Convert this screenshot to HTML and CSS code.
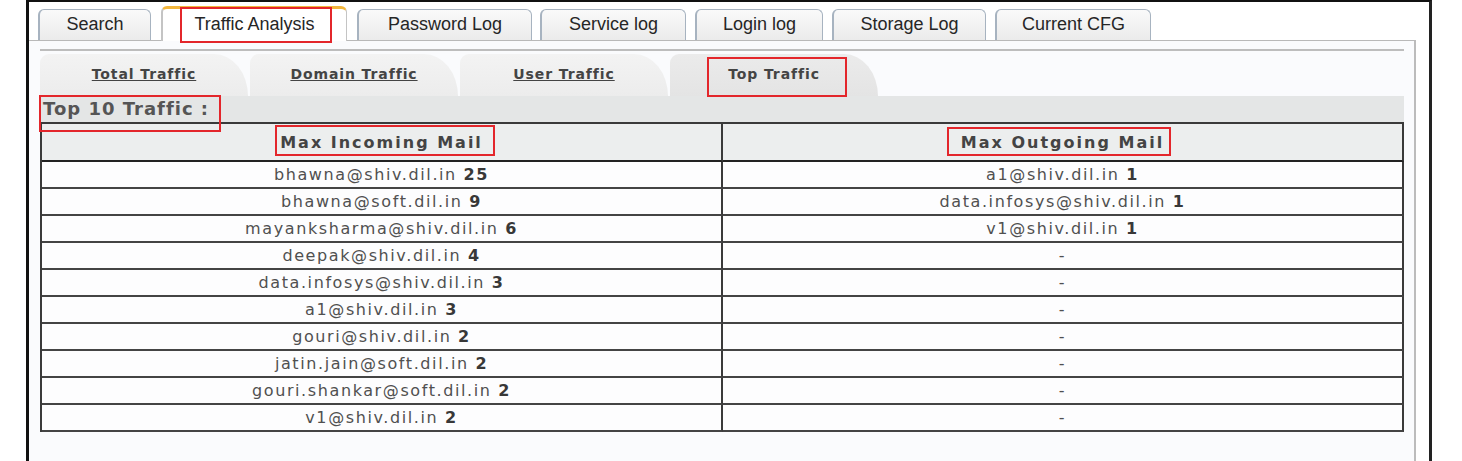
FILE: index.html
```html
<!DOCTYPE html>
<html lang="en">
<head>
  <meta charset="UTF-8">
  <meta name="viewport" content="width=device-width, initial-scale=1.0">
  <title>Traffic Analysis - Top Traffic</title>
  <link rel="stylesheet" href="styles.css">
</head>
<body>
  <div class="frame">
    <ul class="tabs">
      <li class="tab tab-search">Search</li>
      <li class="tab tab-traffic active">Traffic Analysis</li>
      <li class="tab tab-password">Password Log</li>
      <li class="tab tab-service">Service log</li>
      <li class="tab tab-login">Login log</li>
      <li class="tab tab-storage">Storage Log</li>
      <li class="tab tab-cfg">Current CFG</li>
    </ul>

    <div class="panel">
      <div class="subnav">
        <a class="subtab" href="#">Total Traffic</a>
        <a class="subtab" href="#">Domain Traffic</a>
        <a class="subtab" href="#">User Traffic</a>
        <span class="subtab current">Top Traffic</span>
      </div>

      <div class="section-title">Top 10 Traffic :</div>

      <table class="traffic">
        <thead>
          <tr>
            <th>Max Incoming Mail</th>
            <th>Max Outgoing Mail</th>
          </tr>
        </thead>
        <tbody>
          <tr><td>bhawna@shiv.dil.in <b>25</b></td><td>a1@shiv.dil.in <b>1</b></td></tr>
          <tr><td>bhawna@soft.dil.in <b>9</b></td><td>data.infosys@shiv.dil.in <b>1</b></td></tr>
          <tr><td>mayanksharma@shiv.dil.in <b>6</b></td><td>v1@shiv.dil.in <b>1</b></td></tr>
          <tr><td>deepak@shiv.dil.in <b>4</b></td><td>-</td></tr>
          <tr><td>data.infosys@shiv.dil.in <b>3</b></td><td>-</td></tr>
          <tr><td>a1@shiv.dil.in <b>3</b></td><td>-</td></tr>
          <tr><td>gouri@shiv.dil.in <b>2</b></td><td>-</td></tr>
          <tr><td>jatin.jain@soft.dil.in <b>2</b></td><td>-</td></tr>
          <tr><td>gouri.shankar@soft.dil.in <b>2</b></td><td>-</td></tr>
          <tr><td>v1@shiv.dil.in <b>2</b></td><td>-</td></tr>
        </tbody>
      </table>
    </div>

    <!-- red highlight boxes drawn over the screenshot -->
    <div class="mark mark-tab"></div>
    <div class="mark mark-subtab"></div>
    <div class="mark mark-title"></div>
    <div class="mark mark-in"></div>
    <div class="mark mark-out"></div>
  </div>
</body>
</html>
```

FILE: styles.css
```css
html, body {
  margin: 0;
  padding: 0;
  background-color: #fff;
  overflow: hidden;
}

body {
  font-family: "DejaVu Sans", Verdana, sans-serif;
  color: #444;
}

.frame {
  position: relative;
  margin-left: 26px;
  width: 1400px;
  min-height: 480px;
  border-top: 2px solid #111;
  border-left: 3px solid #111;
  border-right: 3px solid #222;
  background-color: #fff;
}

.tabs {
  list-style: none;
  margin: 0;
  padding: 0 0 0 9px;
  height: 38px;
  display: flex;
  align-items: flex-end;
}

.tab {
  box-sizing: border-box;
  height: 31px;
  margin-right: 9px;
  border: 1px solid #a7b3c0;
  border-left-width: 2px;
  border-bottom: none;
  border-radius: 6px 6px 0 0;
  background: linear-gradient(#fafafa, #ebebeb);
  font-family: "Liberation Sans", Arial, sans-serif;
  font-size: 18px;
  line-height: 29px;
  text-align: center;
  color: #262626;
  white-space: nowrap;
}

.tab-search   { width: 113px; }
.tab-traffic  { width: 186px; }
.tab-password { width: 175px; margin-right: 8px; }
.tab-service  { width: 146px; }
.tab-login    { width: 128px; }
.tab-storage  { width: 154px; }
.tab-cfg      { width: 156px; }

.tab.active {
  height: 35px;
  margin-left: 1px;
  margin-right: 10px;
  margin-bottom: -1px;
  border-color: #c4c4c4;
  border-top: 3px solid #f2b63c;
  background: #fff;
  line-height: 31px;
}

.panel {
  margin-right: 13px;
  padding: 8px 10px 0 11px;
  min-height: 430px;
  border-top: 1px solid #b9b9b9;
  border-right: 2px solid #bcbcbc;
  background-color: #fafbfd;
}

.subnav {
  display: flex;
  height: 47px;
  padding-top: 3px;
  box-sizing: border-box;
  border-top: 2px solid #bdbdbd;
}

.subtab {
  box-sizing: border-box;
  width: 208px;
  height: 42px;
  margin-right: 2px;
  border-radius: 9px 34px 0 0 / 9px 42px 0 0;
  background: linear-gradient(#f3f3f3, #ececec);
  text-align: center;
  font-size: 14px;
  font-weight: bold;
  letter-spacing: 0.9px;
  line-height: 40px;
  color: #444;
  text-decoration: underline;
}

.subtab.current {
  background: linear-gradient(#ebebeb, #e4e4e4);
  text-decoration: none;
}

.section-title {
  height: 26px;
  padding-left: 3px;
  background-color: #e4e6e6;
  font-size: 18px;
  font-weight: bold;
  letter-spacing: 1px;
  line-height: 26px;
  color: #555;
}

.traffic {
  width: 100%;
  table-layout: fixed;
  border-spacing: 0;
  border-top: 2px solid #3a3a3a;
  border-left: 2px solid #3a3a3a;
}

.traffic th,
.traffic td {
  width: 50%;
  padding: 0;
  text-align: center;
  border-right: 2px solid #3a3a3a;
  border-bottom: 2px solid #444;
  white-space: nowrap;
}

.traffic th {
  height: 36px;
  background-color: #eceeee;
  font-size: 16px;
  font-weight: bold;
  letter-spacing: 2px;
  color: #444;
  border-bottom-color: #222;
}

.traffic td {
  height: 25px;
  background-color: #fdfdfe;
  font-size: 16px;
  letter-spacing: 1.6px;
  color: #505050;
}

.traffic td b {
  color: #383838;
}

.mark {
  position: absolute;
  box-sizing: border-box;
  border: 2px solid #e3262b;
}

.mark-tab {
  left: 151px;
  top: 5px;
  width: 152px;
  height: 36px;
}

.mark-subtab {
  left: 678px;
  top: 55px;
  width: 140px;
  height: 40px;
}

.mark-title {
  left: 10px;
  top: 93px;
  width: 182px;
  height: 37px;
}

.mark-in {
  left: 246px;
  top: 123px;
  width: 220px;
  height: 31px;
}

.mark-out {
  left: 918px;
  top: 125px;
  width: 224px;
  height: 29px;
}
```
